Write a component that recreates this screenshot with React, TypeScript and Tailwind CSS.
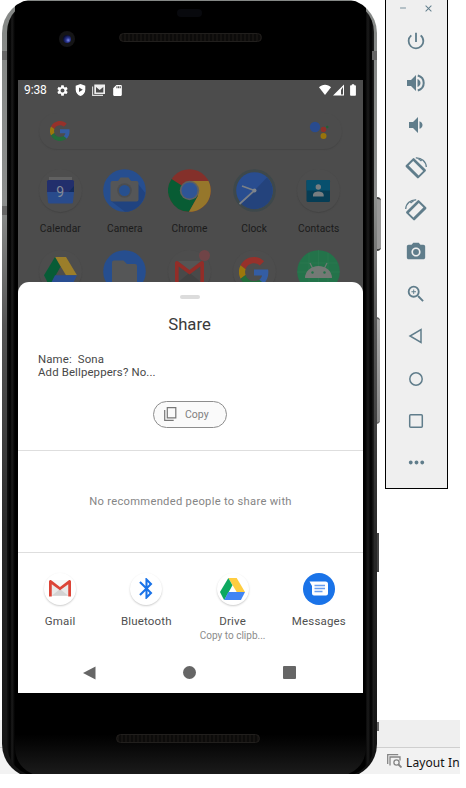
import React from "react";
import {
  MdPowerSettingsNew, MdCameraAlt, MdZoomIn, MdMoreHoriz,
  MdSettings, MdSdCard, MdBatteryFull, MdBluetooth, MdClose, MdRemove,
} from "react-icons/md";

const GoogleG = ({ size }: { size: number }) => (
  <svg width={size} height={size} viewBox="0 0 48 48">
    <path fill="#97312b" d="M24 10c3.500 0 6.700 1.200 9.200 3.600l6.900-6.900C35.900 2.400 30.500 0 24 0 14.600 0 6.500 5.400 2.600 13.200l8 6.200C12.400 13.700 17.700 10 24 10z" />
    <path fill="#345da3" d="M47 24.500c0-1.600-.2-3.100-.4-4.500H24v9.500h12.900c-.6 3-2.300 5.500-4.800 7.200l7.700 6C44.400 38 47 31.800 47 24.500z" />
    <path fill="#9c770c" d="M10.500 28.600a14.500 14.500 0 0 1 0-9.200l-8-6.200a24 24 0 0 0 0 21.600z" />
    <path fill="#246b3b" d="M24 48c6.500 0 11.900-2.100 15.900-5.800l-7.700-6c-2.200 1.500-4.900 2.300-8.200 2.300-6.300 0-11.600-4.200-13.500-9.900l-8 6.200C6.500 42.600 14.600 48 24 48z" />
  </svg>
);

const Drive = ({ size, dim }: { size: number; dim?: boolean }) => (
  <svg width={size} height={size * 0.89} viewBox="0 0 36 32">
    <path fill={dim ? "#9b7e2a" : "#ffcd40"} d="M12 0h12l12 20H24z" />
    <path fill={dim ? "#075c36" : "#0da960"} d="M12 0l6 10.500L6 32 0 20z" />
    <path fill={dim ? "#294d91" : "#4285f4"} d="M12 20h24l-6 12H6z" />
  </svg>
);

const GmailM = ({ size, dim }: { size: number; dim?: boolean }) => (
  <svg width={size} height={size * 0.75} viewBox="0 0 32 24">
    <path fill={dim ? "#494949" : "#e9e9e9"} d="M2 1h28v22H2z" />
    <path fill={dim ? "#424242" : "#d3d3d3"} d="M4 23l12-10 12 10z" />
    <path fill={dim ? "#555" : "#f7f7f7"} d="M3 0h26L16 11z" />
    <path fill={dim ? "#922d28" : "#dc4437"} d="M0 2a2 2 0 0 1 3.200-1.600L16 10 28.800.4A2 2 0 0 1 32 2v22h-4V6L16 15 4 6v18H0z" />
  </svg>
);

const CalendarIcon = () => (
  <svg width="43" height="43" viewBox="0 0 43 43">
    <path fill="#616161" d="M10 8h23v5H10z" />
    <path fill="#222f6c" d="M8 12.500q0-1.500 1.500-1.500h24q1.500 0 1.500 1.500V24H8z" />
    <path fill="#132b5b" d="M29 24l6-7v7z" />
    <path fill="#294b8c" d="M8 23h27l-1 10q0 1.500-1.500 1.500h-22Q9 34.500 9 33z" />
    <text x="21.300" y="28" textAnchor="middle" fontSize="14" fill="#858b98" className="font-['Roboto']">9</text>
  </svg>
);

const CameraIcon = () => (
  <svg width="43" height="43" viewBox="0 0 43 43">
    <circle cx="21.500" cy="21.500" r="21.300" fill="#264e8f" />
    <path d="M35 15l7.300 9A21.300 21.300 0 0 1 22 42.800L8 32z" fill="#204380" />
    <path fill="#555657" d="M9.500 12H15l2.500-3.500h8L28 12h5.500q2 0 2 2v16.500q0 2-2 2h-24q-2 0-2-2V14q0-2 2-2z" />
    <circle cx="21.500" cy="21.500" r="7.300" fill="#4b4d50" />
    <circle cx="21.500" cy="21.500" r="5.500" fill="#27508f" />
  </svg>
);

const ChromeIcon = () => (
  <svg width="43" height="43" viewBox="0 0 43 43">
    <circle cx="21.500" cy="21.500" r="21.300" fill="#84302a" />
    <path fill="#085c34" d="M21.500 21.500L3.500 10A21.300 21.300 0 0 0 21 42.800l9-16z" />
    <path fill="#96772b" d="M21.500 12h19A21.300 21.300 0 0 1 21 42.800l9-16z" />
    <circle cx="21.500" cy="21.500" r="9.700" fill="#5e6062" />
    <circle cx="21.500" cy="21.500" r="8" fill="#2f5596" />
  </svg>
);

const ClockIcon = () => (
  <svg width="43" height="43" viewBox="0 0 43 43">
    <circle cx="21.500" cy="21.500" r="21.300" fill="#3e484b" />
    <circle cx="21.500" cy="21.500" r="18.300" fill="#294d90" />
    <path d="M34 8.500A18.300 18.300 0 0 1 8.500 35z" fill="#24437c" />
    <path d="M9 17l12.500 4.500L6.500 35" stroke="#7b8087" strokeWidth="1.700" fill="none" />
    <circle cx="21.500" cy="21.500" r="2" fill="#80858c" />
  </svg>
);

const ContactsIcon = () => (
  <svg width="43" height="43" viewBox="0 0 43 43">
    <rect x="9.500" y="11" width="23.500" height="22" rx="1.500" fill="#063d55" />
    <path d="M9.500 11h23.500v10.500H9.500z" fill="#07506e" />
    <circle cx="21.300" cy="18" r="2.700" fill="#777d80" />
    <path fill="#777d80" d="M16 27.500V26c0-2.500 3-3.500 5.300-3.500s5.400 1 5.400 3.500v1.500z" />
  </svg>
);

const FilesIcon = () => (
  <svg width="43" height="43" viewBox="0 0 43 43">
    <circle cx="21.500" cy="21.500" r="21.300" fill="#264e8f" />
    <path fill="#555657" d="M11 10.500h9.500l3.500 3.500h8q2 0 2 2v20H9V12.500q0-2 2-2z" />
  </svg>
);

const AndroidIcon = () => (
  <svg width="43" height="43" viewBox="0 0 43 43">
    <circle cx="21.500" cy="21.500" r="21.300" fill="#23734a" />
    <path d="M3 13h37M0 22h43M12 3v37M21.500 0v43M31 3v37" stroke="#307c55" strokeWidth=".5" />
    <path d="M13 13l3 6M30 13l-3 6" stroke="#6d7972" strokeWidth="1.200" />
    <path d="M8 28a13.500 12 0 0 1 27 0z" fill="#747975" />
    <circle cx="15.500" cy="22.500" r="1.200" fill="#23734a" />
    <circle cx="27.500" cy="22.500" r="1.200" fill="#23734a" />
  </svg>
);

const Plate = ({ children }: { children: React.ReactNode }) => (
  <div className="relative flex size-[43px] items-center justify-center rounded-full bg-[#4d4d4d] shadow-[0_1px_1px_#444444]">{children}</div>
);

const apps = [
  { name: "Calendar", icon: <Plate><CalendarIcon /></Plate> },
  { name: "Camera", icon: <CameraIcon /> },
  { name: "Chrome", icon: <ChromeIcon /> },
  { name: "Clock", icon: <ClockIcon /> },
  { name: "Contacts", icon: <Plate><ContactsIcon /></Plate> },
];

const secondRow = [
  <Plate><Drive size={33} dim /></Plate>,
  <FilesIcon />,
  <Plate><GmailM size={29} dim /><span className="absolute right-[1px] top-0 size-[11px] rounded-full bg-[#704447]" /></Plate>,
  <Plate><GoogleG size={30} /></Plate>,
  <AndroidIcon />,
];

const Rotate = ({ flip }: { flip?: boolean }) => (
  <svg width="22" height="22" viewBox="0 0 22 22" className={flip ? "-scale-x-100" : ""}>
    <path
      fillRule="evenodd"
      fill="currentColor"
      d="M7.800 1.400L.9 8.300q-.8.800 0 1.600l11.200 11.200q.8.800 1.600 0l6.900-6.900q.8-.8 0-1.600L9.400 1.400q-.8-.8-1.600 0zM8.200 3.900l10 10-4.600 4.600-10-10z"
    />
    <path d="M10.800.900C16.500.6 21 4.500 21.300 10" fill="none" stroke="currentColor" strokeWidth="1.300" />
    <path d="M11.500.900l4.500 3.600 1.300-1.400z" fill="currentColor" />
  </svg>
);

const tools = [
  <MdPowerSettingsNew size={22} />,
  <svg width="18" height="18" viewBox="0 0 18 18">
    <path fill="currentColor" d="M0 6h4l5-5v16l-5-5H0zM10.500 5c2 .8 3 2.300 3 4s-1 3.200-3 4z" />
    <path d="M10.800 1.500c3.500 1 5.900 4 5.900 7.500s-2.400 6.500-5.900 7.500" fill="none" stroke="currentColor" strokeWidth="2" />
  </svg>,
  <svg width="14" height="16" viewBox="0 0 14 16">
    <path fill="currentColor" d="M0 5h4l5-5v16l-5-5H0zM10.500 4.200c2 .7 3 2.200 3 3.800s-1 3.100-3 3.800z" />
  </svg>,
  <Rotate />,
  <Rotate flip />,
  <MdCameraAlt size={22} />,
  <MdZoomIn size={22} />,
  <svg width="16" height="16" viewBox="0 0 16 16"><path d="M13 1.500v13L2 8z" fill="none" stroke="currentColor" strokeWidth="1.500" /></svg>,
  <svg width="16" height="16" viewBox="0 0 16 16"><circle cx="8" cy="8" r="6.200" fill="none" stroke="currentColor" strokeWidth="1.500" /></svg>,
  <svg width="16" height="16" viewBox="0 0 16 16"><rect x="1.700" y="1.700" width="12.600" height="12.600" rx="1" fill="none" stroke="currentColor" strokeWidth="1.500" /></svg>,
  <MdMoreHoriz size={23} />,
];

const targets = [
  { name: "Gmail", icon: <GmailM size={22} /> },
  { name: "Bluetooth", icon: <MdBluetooth size={25} className="text-[#1a73e8]" /> },
  { name: "Drive", note: "Copy to clipb...", icon: <Drive size={25} /> },
  {
    name: "Messages",
    blue: true,
    icon: (
      <svg width="20" height="16" viewBox="0 0 20 16">
        <path fill="#fff" d="M.5.500h16q2.500 0 2.500 2.500v9.500q0 2-2 2H5q-2 0-2-2V5z" />
        <path d="M5.500 4.500h10.500M5.500 7.500h10.500M5.500 10.500h8" stroke="#6a9ff0" strokeWidth="1.300" />
      </svg>
    ),
  },
];

function StatusBar() {
  return (
    <div className="flex h-5 items-center pl-[6px] pr-[3px] text-white">
      <span className="w-[32px] text-[12px] leading-5 tracking-[-0.1px]">9:38</span>
      <MdSettings size={13} />
      <svg width="11" height="12" viewBox="0 0 11 12" className="ml-[6px]">
        <path fill="#fff" fillRule="evenodd" d="M5.500 0l4.800 1.700v4C10.300 9 8 11.200 5.500 12 3 11.200.7 9 .7 5.700v-4zM4 3.500v4.600L7.800 5.800z" />
      </svg>
      <svg width="13" height="12" viewBox="0 0 13 12" className="ml-[6px]">
        <path fill="none" stroke="#ddd" strokeWidth="1.100" d="M.6 2.500v8.900H11" />
        <path fill="#eee" fillRule="evenodd" d="M2.300.500H13V10H2.300zM4 3v5.500h7.300V3L7.700 6z" />
      </svg>
      <MdSdCard size={13} className="ml-[6px]" />
      <svg width="12" height="12" viewBox="0 0 12 12" className="ml-auto"><path fill="#fff" d="M0 3.200C3-.2 9-.2 12 3.200L6 11z" /></svg>
      <svg width="12" height="12" viewBox="0 0 12 12" className="ml-[2px]">
        <path fill="#fff" fillRule="evenodd" d="M11 .500V11.500H0zM8 6v4.500h2V3z" />
      </svg>
      <MdBatteryFull size={14} className="ml-px" />
    </div>
  );
}

function ShareSheet() {
  return (
    <div className="absolute inset-x-0 bottom-0 flex h-[411px] flex-col rounded-t-[11px] bg-white">
      <div className="ml-[162px] mt-[13px] h-[3.500px] w-5 rounded-sm bg-[#dcdcdc]" />
      <h1 className="mt-[14px] pr-[2px] text-center text-[16.700px] leading-6 text-[#3a3a3a]">Share</h1>
      <div className="mt-[16px] whitespace-pre pl-5 text-[11.400px] leading-[13.600px] tracking-[0.140px] text-[#484848]">{"Name:  Sona\nAdd Bellpeppers? No..."}</div>
      <div className="ml-[135px] mt-[21px] flex h-[27px] w-[74px] items-center rounded-full border border-[#8d8d8d] bg-[#fafafa] pl-[10px] text-[10.500px] text-[#808080]">
        <svg width="13" height="14" viewBox="0 0 13 14" fill="none" stroke="#777" strokeWidth="1.200" className="mr-2">
          <path d="M3.300.700h8.500v10.200H3.300zM.7 3v10.300h9" />
        </svg>
        <span className="pt-[2px]">Copy</span>
      </div>
      <div className="mt-[22px] flex h-[103px] items-center justify-center border-y border-[#dedede] pt-[2px] text-[11.200px] tracking-[0.290px] text-[#858585]">No recommended people to share with</div>
      <div className="grid h-[99px] grid-cols-4 pt-[20px]">
        {targets.map((t) => (
          <div key={t.name} className="flex flex-col items-center pr-[2px]">
            <div className={`flex size-8 items-center justify-center rounded-full ${t.blue ? "bg-[#1a73e8]" : "bg-white shadow-[0_1px_2px_#cccccc]"}`}>{t.icon}</div>
            <span className="mt-[8px] text-[11.500px] leading-4 tracking-[0.180px] text-[#505050]">{t.name}</span>
            {t.note && <span className="text-[10px] leading-[14px] text-[#8b8b8b]">{t.note}</span>}
          </div>
        ))}
      </div>
      <div className="flex h-[41px] items-center justify-between pl-[65px] pr-[67px] pt-px">
        <svg width="13" height="14" viewBox="0 0 13 14"><path d="M12.500.500v13L0 7z" fill="#666" /></svg>
        <span className="size-[13px] rounded-full bg-[#666]" />
        <span className="size-[13px] rounded-[1px] bg-[#666]" />
      </div>
    </div>
  );
}

function Phone() {
  return (
    <div className="absolute left-[2px] top-0 h-[774px] w-[380px] overflow-hidden">
      <div className="absolute left-[374px] top-[197px] h-[54px] w-[5px] rounded-r-sm border-y-2 border-[#444] bg-[#999]" />
      <div className="absolute left-[374px] top-[317px] h-[107px] w-[4px] rounded-r-sm border-y-2 border-[#666] bg-[linear-gradient(#aaa,#888)]" />
      <div className="absolute left-[374px] top-[533px] h-[39px] w-[3px] bg-[#444]" />
      <div className="absolute left-[374px] top-[722px] h-[9px] w-[3px] bg-[#666]" />
      <div className="absolute -top-px left-0 h-[779px] w-[375px] overflow-hidden rounded-[34px] bg-[linear-gradient(#858886_0%,#8c8e8d_26%,#555_42%,#2b2b2b_68%,#111_100%)]">
        <div className="ml-[5px] mr-[3px] mt-[2px] flex h-[775px] flex-col items-center rounded-[31px] bg-[linear-gradient(90deg,#111_0,#000_3px,#1b1b1b_5px,#000_8px,#000_358px,#1b1b1b_361px,#000_364px,#222_367px)]">
          <div className="relative h-[79px] w-[351px] shrink-0 bg-black px-[3px]">
            <div className="absolute left-[162px] top-[8px] h-2 w-[25px] rounded bg-[#08090d]" />
            <div className="absolute left-[44px] top-[30px] flex size-4 items-center justify-center rounded-full bg-[#151516]">
              <span className="size-2 rounded-full bg-[radial-gradient(circle_at_65%_65%,#7d8be8_0,#2a3590_30%,#080c30_70%)]" />
            </div>
            <Speaker top />
          </div>
          <div className="relative h-[613px] w-[345px] shrink-0 overflow-hidden bg-[#4c4c4c] font-['Roboto',sans-serif]">
            <StatusBar />
            <div className="mx-auto mt-[13px] flex h-9 w-[303px] items-center justify-between rounded-full pl-[11px] pr-[13px] shadow-[0_1px_1px_#454545]">
              <GoogleG size={20} />
              <svg width="20" height="20" viewBox="0 0 20 20">
                <circle cx="6" cy="6" r="5.200" fill="#294b8e" /><circle cx="14.500" cy="8.500" r="2.700" fill="#8d2f29" />
                <circle cx="14.500" cy="15" r="3" fill="#98730b" /><circle cx="18.300" cy="6" r="1.200" fill="#1e6234" />
              </svg>
            </div>
            <div className="ml-[10px] mt-[20px] grid w-[323px] grid-cols-5">
              {apps.map((a) => (
                <div key={a.name} className="flex flex-col items-center">
                  {a.icon}
                  <span className="mt-[9px] text-[10.200px] leading-[15px] tracking-[0.060px] text-[#1b1b1b]">{a.name}</span>
                </div>
              ))}
            </div>
            <div className="ml-[10px] mt-[14px] grid w-[323px] grid-cols-5 justify-items-center">
              {secondRow.map((icon, i) => <React.Fragment key={i}>{icon}</React.Fragment>)}
            </div>
            <ShareSheet />
          </div>
          <div className="relative h-[83px] w-[351px] shrink-0 rounded-b-[28px] bg-[linear-gradient(#000_50%,#1c1c1c)]">
            <Speaker />
          </div>
        </div>
        <div className="absolute left-0 top-[52px] h-[9px] w-[5px] bg-[#666]" />
        <div className="absolute left-0 top-[207px] h-[9px] w-[5px] bg-[#666]" />
        <div className="absolute right-0 top-[52px] h-[9px] w-[5px] bg-[#666]" />
      </div>
    </div>
  );
}

const Speaker = ({ top }: { top?: boolean }) => (
  <div className={`absolute h-[9px] rounded-full border border-[#211f1d] bg-[repeating-linear-gradient(90deg,#151311_0,#151311_2px,#0c0b0a_2px,#0c0b0a_4px)] ${top ? "left-[104px] top-[32px] w-[143px]" : "left-[101px] top-[41px] w-[144px]"}`} />
);

function Toolbar() {
  return (
    <div className="absolute left-[385px] top-0 flex h-[489px] w-[63px] flex-col border-x border-b border-black bg-[#efefef] text-[#607d8b]">
      <div className="flex h-[20px] items-start justify-between pl-3 pr-[13px] pt-[3px]">
        <MdRemove size={10} />
        <MdClose size={11} />
      </div>
      <div className="grid auto-rows-[42.200px]">
        {tools.map((icon, i) => <div key={i} className="flex items-center justify-center pr-px">{icon}</div>)}
      </div>
    </div>
  );
}

export default function App() {
  return (
    <div className="relative h-[788px] w-[466px] overflow-hidden bg-white">
      <div className="flex h-[774px] w-[460px] flex-col justify-end">
        <div className="h-[27px] bg-[#efefef]" />
        <div className="flex h-[27px] items-center overflow-hidden whitespace-nowrap border-t border-[#cfcfcf] bg-[#f2f2f2] pl-[387px] font-['Noto_Sans',sans-serif] text-[12px] text-[#111]">
          <svg width="15" height="14" viewBox="0 0 15 14" fill="none" stroke="#858585" strokeWidth="1.300" className="mr-1 shrink-0">
            <path d="M.7 10V.700h10.500M3 11.500V3h10v3.500" /><circle cx="9.500" cy="8.500" r="2.600" /><path d="M11.500 10.500l3 3" strokeWidth="1.800" />
          </svg>
          <span className="pt-[3px] tracking-[0.100px]">Layout In</span>
        </div>
      </div>
      <Phone />
      <Toolbar />
    </div>
  );
}
